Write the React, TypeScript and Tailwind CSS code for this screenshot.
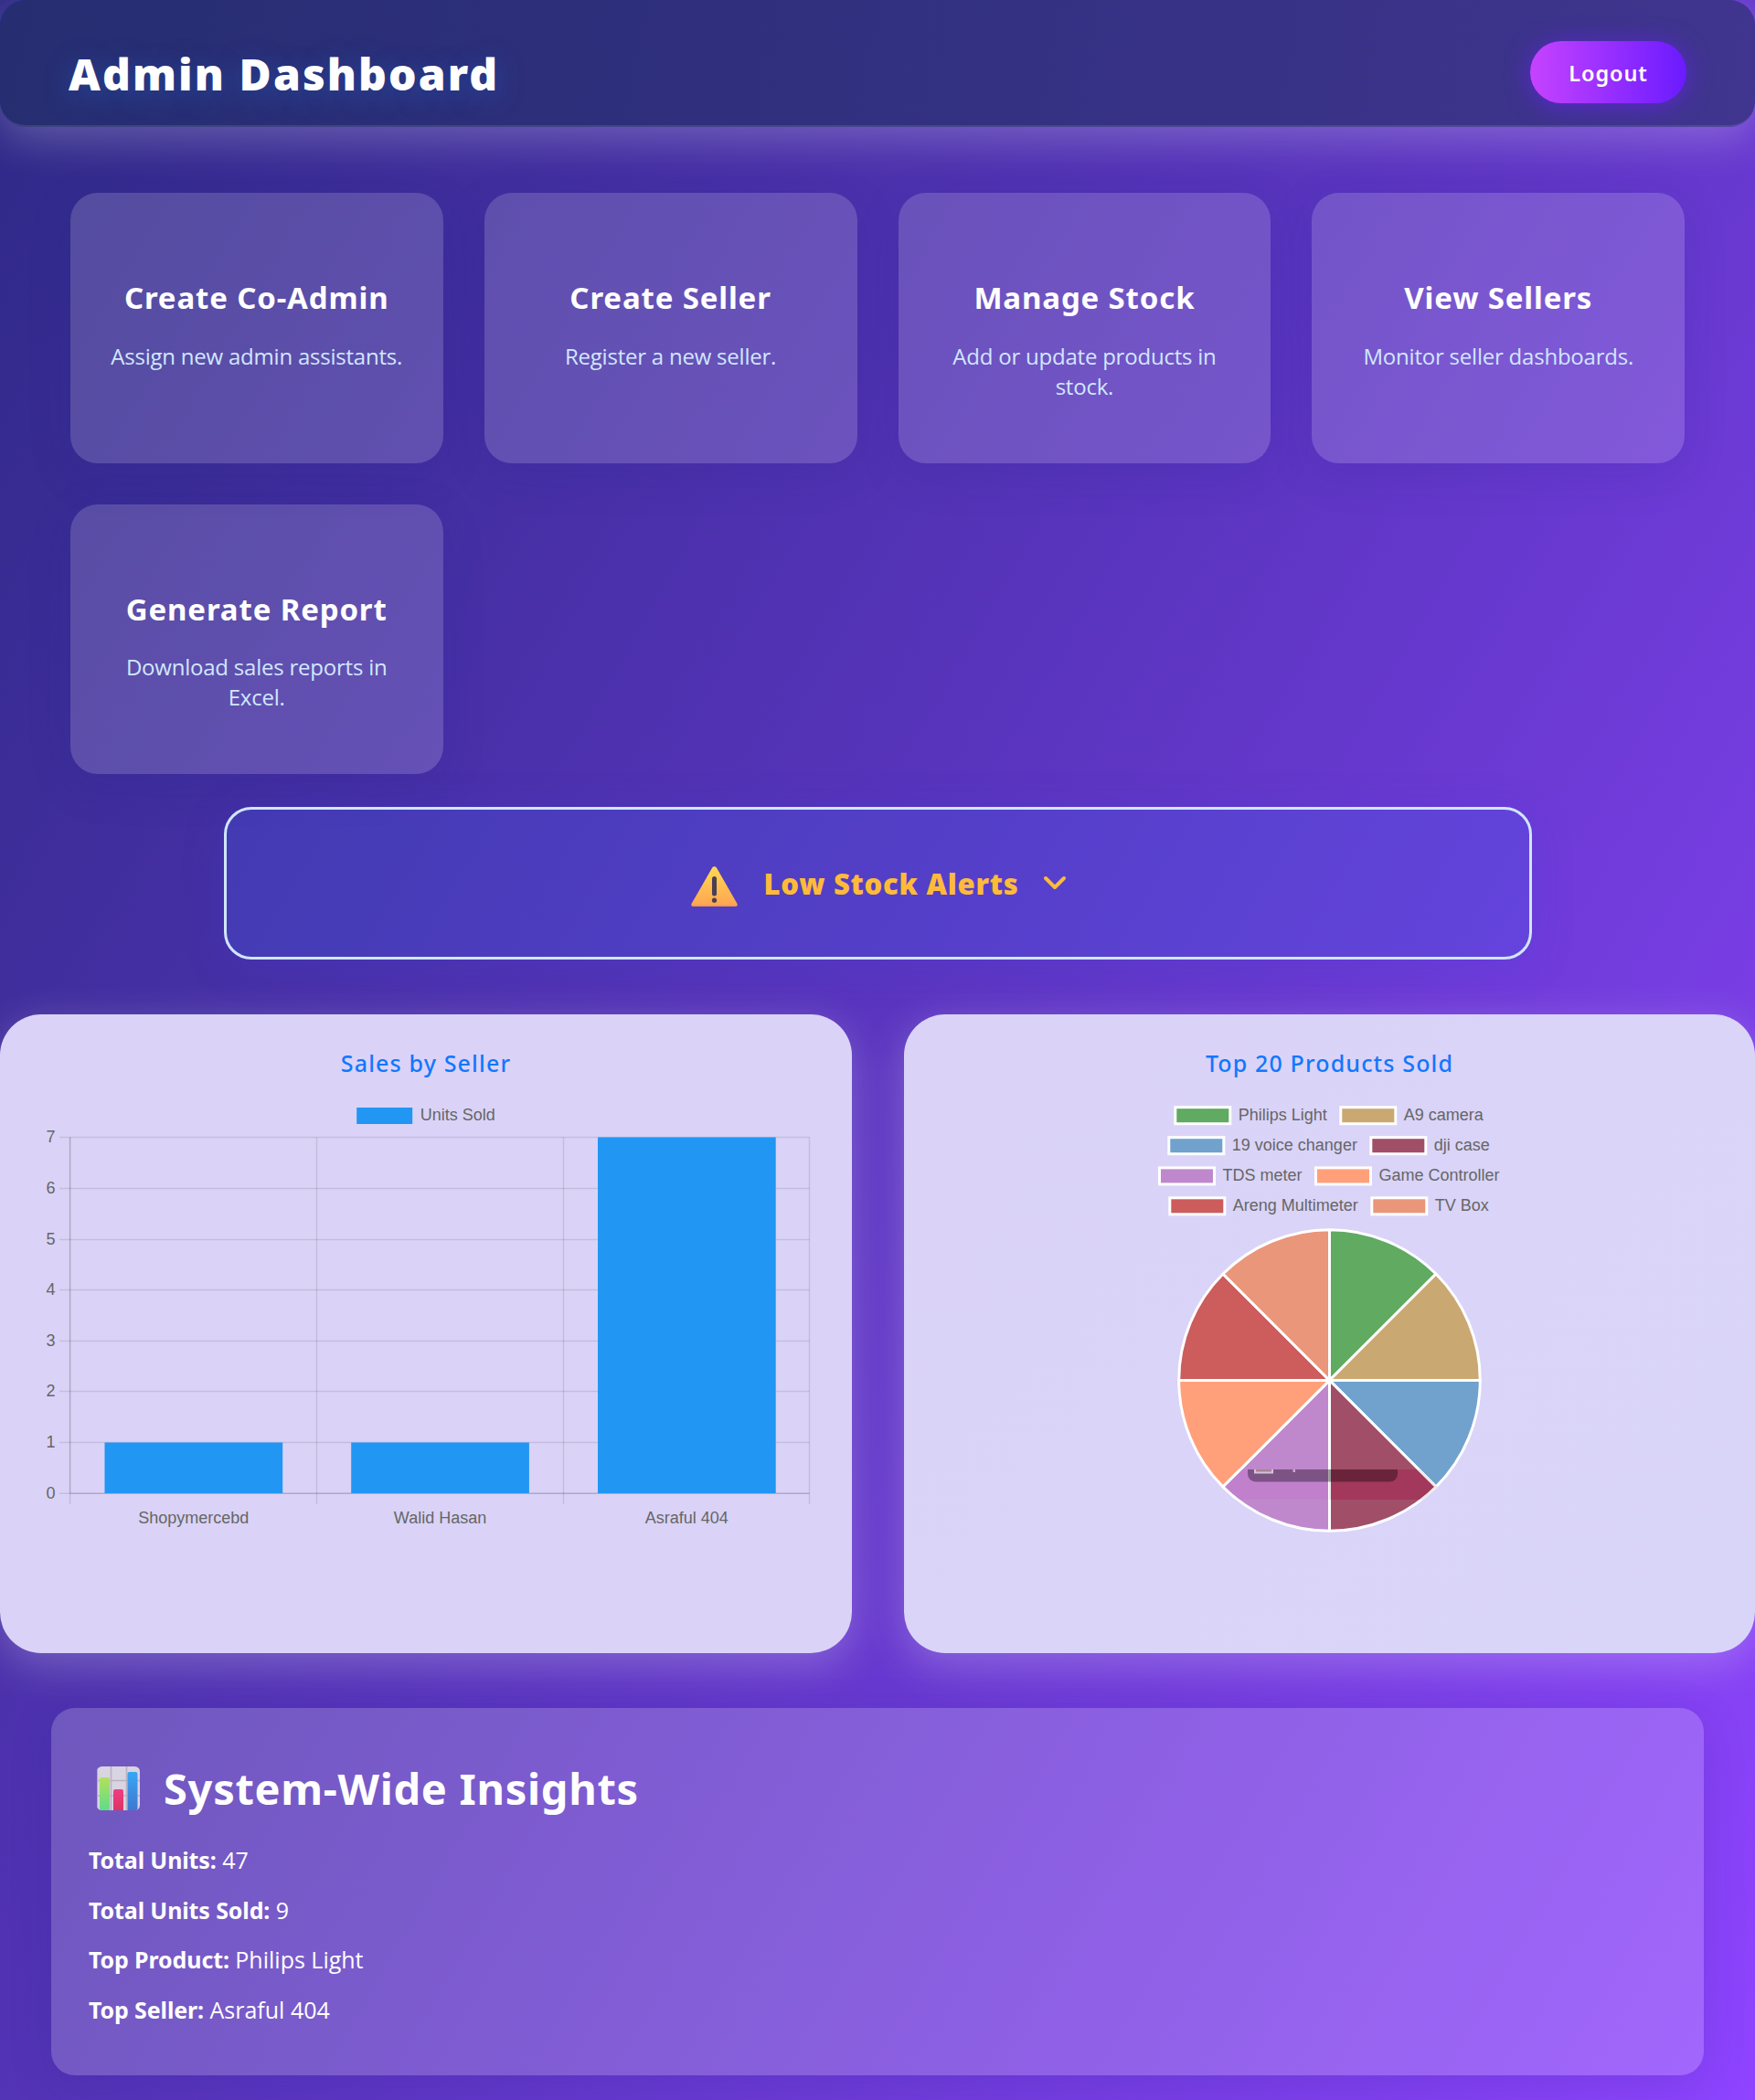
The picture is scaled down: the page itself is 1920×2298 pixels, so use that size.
import React from 'react';

const actions = [
  { title: 'Create Co-Admin', text: 'Assign new admin assistants.' },
  { title: 'Create Seller', text: 'Register a new seller.' },
  { title: 'Manage Stock', text: 'Add or update products in stock.' },
  { title: 'View Sellers', text: 'Monitor seller dashboards.' },
  { title: 'Generate Report', text: 'Download sales reports in Excel.' },
];

const insights = [
  ['Total Units:', '47'],
  ['Total Units Sold:', '9'],
  ['Top Product:', 'Philips Light'],
  ['Top Seller:', 'Asraful 404'],
];

const sellers = [
  { name: 'Shopymercebd', x: 114.5, y: 1578.5 },
  { name: 'Walid Hasan', x: 384.2, y: 1578.5 },
  { name: 'Asraful 404', x: 654, y: 1244.5 },
];

const gridY = [1634.2, 1578.6, 1522.4, 1467.4, 1411.4, 1356.6, 1300.6, 1244.4];
const gridX = [76.6, 346.5, 616.5, 885.5];

const products = [
  { name: 'Philips Light', color: '#60aa62', x: 1285.8, y: 1211.7 },
  { name: 'A9 camera', color: '#caa872', x: 1466.8, y: 1211.7 },
  { name: '19 voice changer', color: '#70a2cd', x: 1278.8, y: 1244.7 },
  { name: 'dji case', color: '#a14e69', x: 1499.8, y: 1244.7 },
  { name: 'TDS meter', color: '#c088cc', x: 1268.5, y: 1277.9 },
  { name: 'Game Controller', color: '#ffa07a', x: 1439.5, y: 1277.9 },
  { name: 'Areng Multimeter', color: '#cd5c5c', x: 1279.8, y: 1310.8 },
  { name: 'TV Box', color: '#e9967a', x: 1500.8, y: 1310.8 },
];

const CX = 1454.5;
const CY = 1510.5;
const R = 164.8;

function slicePath(i: number) {
  const a0 = (i * Math.PI) / 4 - Math.PI / 2;
  const a1 = a0 + Math.PI / 4;
  const p = (a: number) => `${CX + R * Math.cos(a)} ${CY + R * Math.sin(a)}`;
  return `M${CX} ${CY}L${p(a0)}A${R} ${R} 0 0 1 ${p(a1)}Z`;
}

function WarningIcon() {
  return (
    <svg className="mt-[7px] h-[44px] w-[51px]" viewBox="0 0 51 44">
      <defs>
        <linearGradient id="warn" x1="0" y1="0" x2="0" y2="1">
          <stop offset="0" stopColor="#ffd94f" />
          <stop offset="1" stopColor="#ffa454" />
        </linearGradient>
      </defs>
      <path d="M23.2 1.6a2.7 2.7 0 0 1 4.7 0L50.4 40.8a2.1 2.1 0 0 1-1.8 3.2H2.4a2.1 2.1 0 0 1-1.8-3.2z" fill="url(#warn)" />
      <path d="M.9 42.6q.5 1.4 1.9 1.4h45.600q1.400 0 1.900-1.400z" fill="#ef9350" />
      <rect x="23" y="11" width="5" height="21.500" rx="2.500" fill="#4a4054" />
      <circle cx="25.500" cy="37.200" r="2.600" fill="#4a4054" />
    </svg>
  );
}

function ChartIcon() {
  return (
    <svg className="ml-[9px] h-[48px] w-[47px]" viewBox="0 0 47 48">
      <defs>
        <linearGradient id="g" x1="0" y1="0" x2="0" y2="1">
          <stop offset="0" stopColor="#b3e05a" />
          <stop offset="1" stopColor="#5fdc8c" />
        </linearGradient>
        <linearGradient id="r" x1="0" y1="0" x2="0" y2="1">
          <stop offset="0" stopColor="#f03c86" />
          <stop offset="1" stopColor="#dd3560" />
        </linearGradient>
        <linearGradient id="b" x1="0" y1="0" x2="0" y2="1">
          <stop offset="0" stopColor="#38a6f5" />
          <stop offset="1" stopColor="#3f78cf" />
        </linearGradient>
        <clipPath id="c">
          <rect width="47" height="48" rx="5.500" />
        </clipPath>
      </defs>
      <g clipPath="url(#c)">
        <rect width="47" height="48" fill="#d9d4e2" />
        <path d="M15.500 0V48M32.500 0V48M0 15.500H47M0 32H47" stroke="#b9b1c2" strokeWidth="1.600" />
        <path d="M0 0V48" stroke="#b4abbe" strokeWidth="2" />
        <path d="M3 48V14a2 2 0 0 1 2-2h7a2 2 0 0 1 2 2V48z" fill="url(#g)" />
        <path d="M18 48V27a2 2 0 0 1 2-2h7a2 2 0 0 1 2 2V48z" fill="url(#r)" />
        <path d="M33.500 48V8a2 2 0 0 1 2-2h7a2 2 0 0 1 2 2V48z" fill="url(#b)" />
      </g>
    </svg>
  );
}

function SalesChart() {
  return (
    <svg className="block h-[627px] w-[932px] font-['Liberation_Sans',Arial,sans-serif] text-[18px]" viewBox="0 1182 932 627" fill="#666666">
      <rect x="390.200" y="1212" width="61" height="18" fill="#2196f3" />
      <text x="459.700" y="1226.300">Units Sold</text>
      {gridY.map((y, i) => (
        <g key={y}>
          <path d={`M65 ${y}H885.500`} stroke="#000" strokeOpacity=".1" strokeWidth="1.500" />
          <text x="60.500" y={y + 5.6} textAnchor="end">{i}</text>
        </g>
      ))}
      {gridX.map((x) => (
        <path key={x} d={`M${x} 1244.500V1646`} stroke="#000" strokeOpacity=".1" strokeWidth="1.500" />
      ))}
      <path d="M76.600 1244.500V1634.200H885.500" fill="none" stroke="#000" strokeOpacity=".1" strokeWidth="1.500" />
      {sellers.map((s) => (
        <g key={s.name}>
          <rect x={s.x} y={s.y} width="194.700" height={1634 - s.y} fill="#2196f3" />
          <text x={s.x + 97.3} y="1667" textAnchor="middle">{s.name}</text>
        </g>
      ))}
    </svg>
  );
}

function ProductsChart() {
  return (
    <svg className="block h-[627px] w-[931px] font-['Liberation_Sans',Arial,sans-serif] text-[18px]" viewBox="989 1182 931 627" fill="#666666">
      <defs>
        <clipPath id="band">
          <rect x="1289" y="1608" width="166" height="33" />
        </clipPath>
        <clipPath id="band2">
          <rect x="1454" y="1608" width="166" height="33" />
        </clipPath>
      </defs>
      {products.map((p) => (
        <g key={p.name}>
          <rect x={p.x} y={p.y} width="60" height="18" fill={p.color} stroke="#fff" strokeWidth="3" />
          <text x={p.x + 69} y={p.y + 14.400}>{p.name}</text>
        </g>
      ))}
      {products.map((p, i) => (
        <path key={p.name} d={slicePath(i)} fill={p.color} stroke="#fff" strokeWidth="3" strokeLinejoin="bevel" />
      ))}
      <g clipPath="url(#band)">
        <path d={slicePath(4)} fill="#c080cc" stroke="#fff" strokeWidth="3" />
      </g>
      <g clipPath="url(#band2)">
        <path d={slicePath(3)} fill="#a2385b" stroke="#eeeaea" strokeWidth="3" />
      </g>
      <path d="M1365 1608h164v5a8.500 8.500 0 0 1-8.500 8.500h-147a8.500 8.500 0 0 1-8.500-8.500z" fill="#000" fillOpacity=".35" />
      <path d="M1373 1608v3.500h19v-3.500" fill="#a98592" stroke="#d3c6da" strokeWidth="2" />
      <rect x="1414.500" y="1608" width="2.500" height="3" fill="#c3adc9" />
    </svg>
  );
}

export default function App() {
  return (
    <div className="flex h-[2298px] w-[1920px] flex-col overflow-hidden bg-[linear-gradient(120deg,#2e2986_0%,#5b35c0_50%,#8f44ff_100%)] font-['Noto_Sans',sans-serif] text-white">
      <header className="flex h-[139px] shrink-0 items-start justify-between rounded-[28px] border-b-2 border-white/10 bg-[linear-gradient(100deg,#262e71_0%,#2f2f7d_40%,#40358f_100%)] bg-origin-border pt-[45px] pr-[75px] pl-[75px] shadow-[0_12px_48px_rgba(255,255,255,0.24)]">
        <h1 className="mt-[6px] text-[48px] leading-[60px] font-black tracking-[2.1px] [text-shadow:0_6px_30px_rgba(33,120,230,0.35)]">Admin Dashboard</h1>
        <button className="h-[68px] w-[171px] rounded-[34px] bg-[linear-gradient(90deg,#c643ff_0%,#6a1bff_100%)] text-[23.5px] leading-[70px] font-semibold tracking-[0.9px] shadow-[0_3px_27px_rgba(115,30,255,0.6)]">Logout</button>
      </header>

      <section className="mt-[72px] grid grid-cols-4 gap-[45px] px-[76.800px]">
        {actions.map((a) => (
          <div key={a.title} className="h-[295.700px] rounded-[30px] bg-white/16 px-9 pt-[93px] text-center shadow-[0_12px_48px_rgba(31,38,135,0.16)]">
            <h3 className="text-[33px] leading-[44px] font-bold tracking-[0.850px] whitespace-nowrap">{a.title}</h3>
            <p className="mt-[24.500px] font-['Open_Sans',sans-serif] text-[24px] leading-[33px] tracking-[-0.220px] text-[#d0e7ff]">{a.text}</p>
          </div>
        ))}
      </section>

      <section className="mx-auto mt-[35.600px] flex h-[167px] w-[1431px] shrink-0 items-center justify-center rounded-[30px] border-[3px] border-[#d0e6ff] bg-[rgba(66,96,232,0.25)] pl-1 shadow-[0_8px_48px_rgba(60,70,220,0.2)]">
        <WarningIcon />
        <h2 className="mt-px ml-[28px] text-[31px] leading-[44px] font-black tracking-[0.750px] text-[#ffbb38]">Low Stock Alerts</h2>
        <svg className="ml-[25px] h-[18px] w-[28px]" viewBox="-1 -1 28 18" fill="none" stroke="#ffbb38" strokeWidth="4" strokeLinecap="round" strokeLinejoin="round">
          <path d="M3 3l10 10L23 3" />
        </svg>
      </section>

      <section className="mt-[60px] grid shrink-0 grid-cols-[932px_931px] justify-between">
        <div className="h-[699px] rounded-[45px] bg-[#dad3f7] pt-[35px] shadow-[0_12px_48px_rgba(255,255,255,0.24)]">
          <h3 className="mb-px text-center text-[25px] leading-[36px] font-medium tracking-[1.150px] text-[#1277ff]">Sales by Seller</h3>
          <SalesChart />
        </div>
        <div className="h-[699px] rounded-[45px] bg-[linear-gradient(135deg,#dad3f7,#d9d5f9)] pt-[35px] shadow-[0_12px_48px_rgba(255,255,255,0.24)]">
          <h3 className="mb-px text-center text-[25px] leading-[36px] font-medium tracking-[1.150px] text-[#1277ff]">Top 20 Products Sold</h3>
          <ProductsChart />
        </div>
      </section>

      <section className="mx-14 mt-[60px] h-[402px] shrink-0 rounded-[26px] bg-white/19 pt-14 pl-[41px] shadow-[0_12px_48px_rgba(31,38,135,0.16)]">
        <div className="flex items-center">
          <ChartIcon />
          <h2 className="ml-[26px] text-[47px] leading-[64px] font-bold tracking-[0.700px]">System-Wide Insights</h2>
        </div>
        <div className="mt-[19px]">
          {insights.map(([label, value]) => (
            <p key={label} className="text-[25px] leading-[54.600px]">
              <strong className="font-bold tracking-[-0.120px]">{label}</strong>{' '}
              <span className="font-['Open_Sans',sans-serif]">{value}</span>
            </p>
          ))}
        </div>
      </section>
    </div>
  );
}
